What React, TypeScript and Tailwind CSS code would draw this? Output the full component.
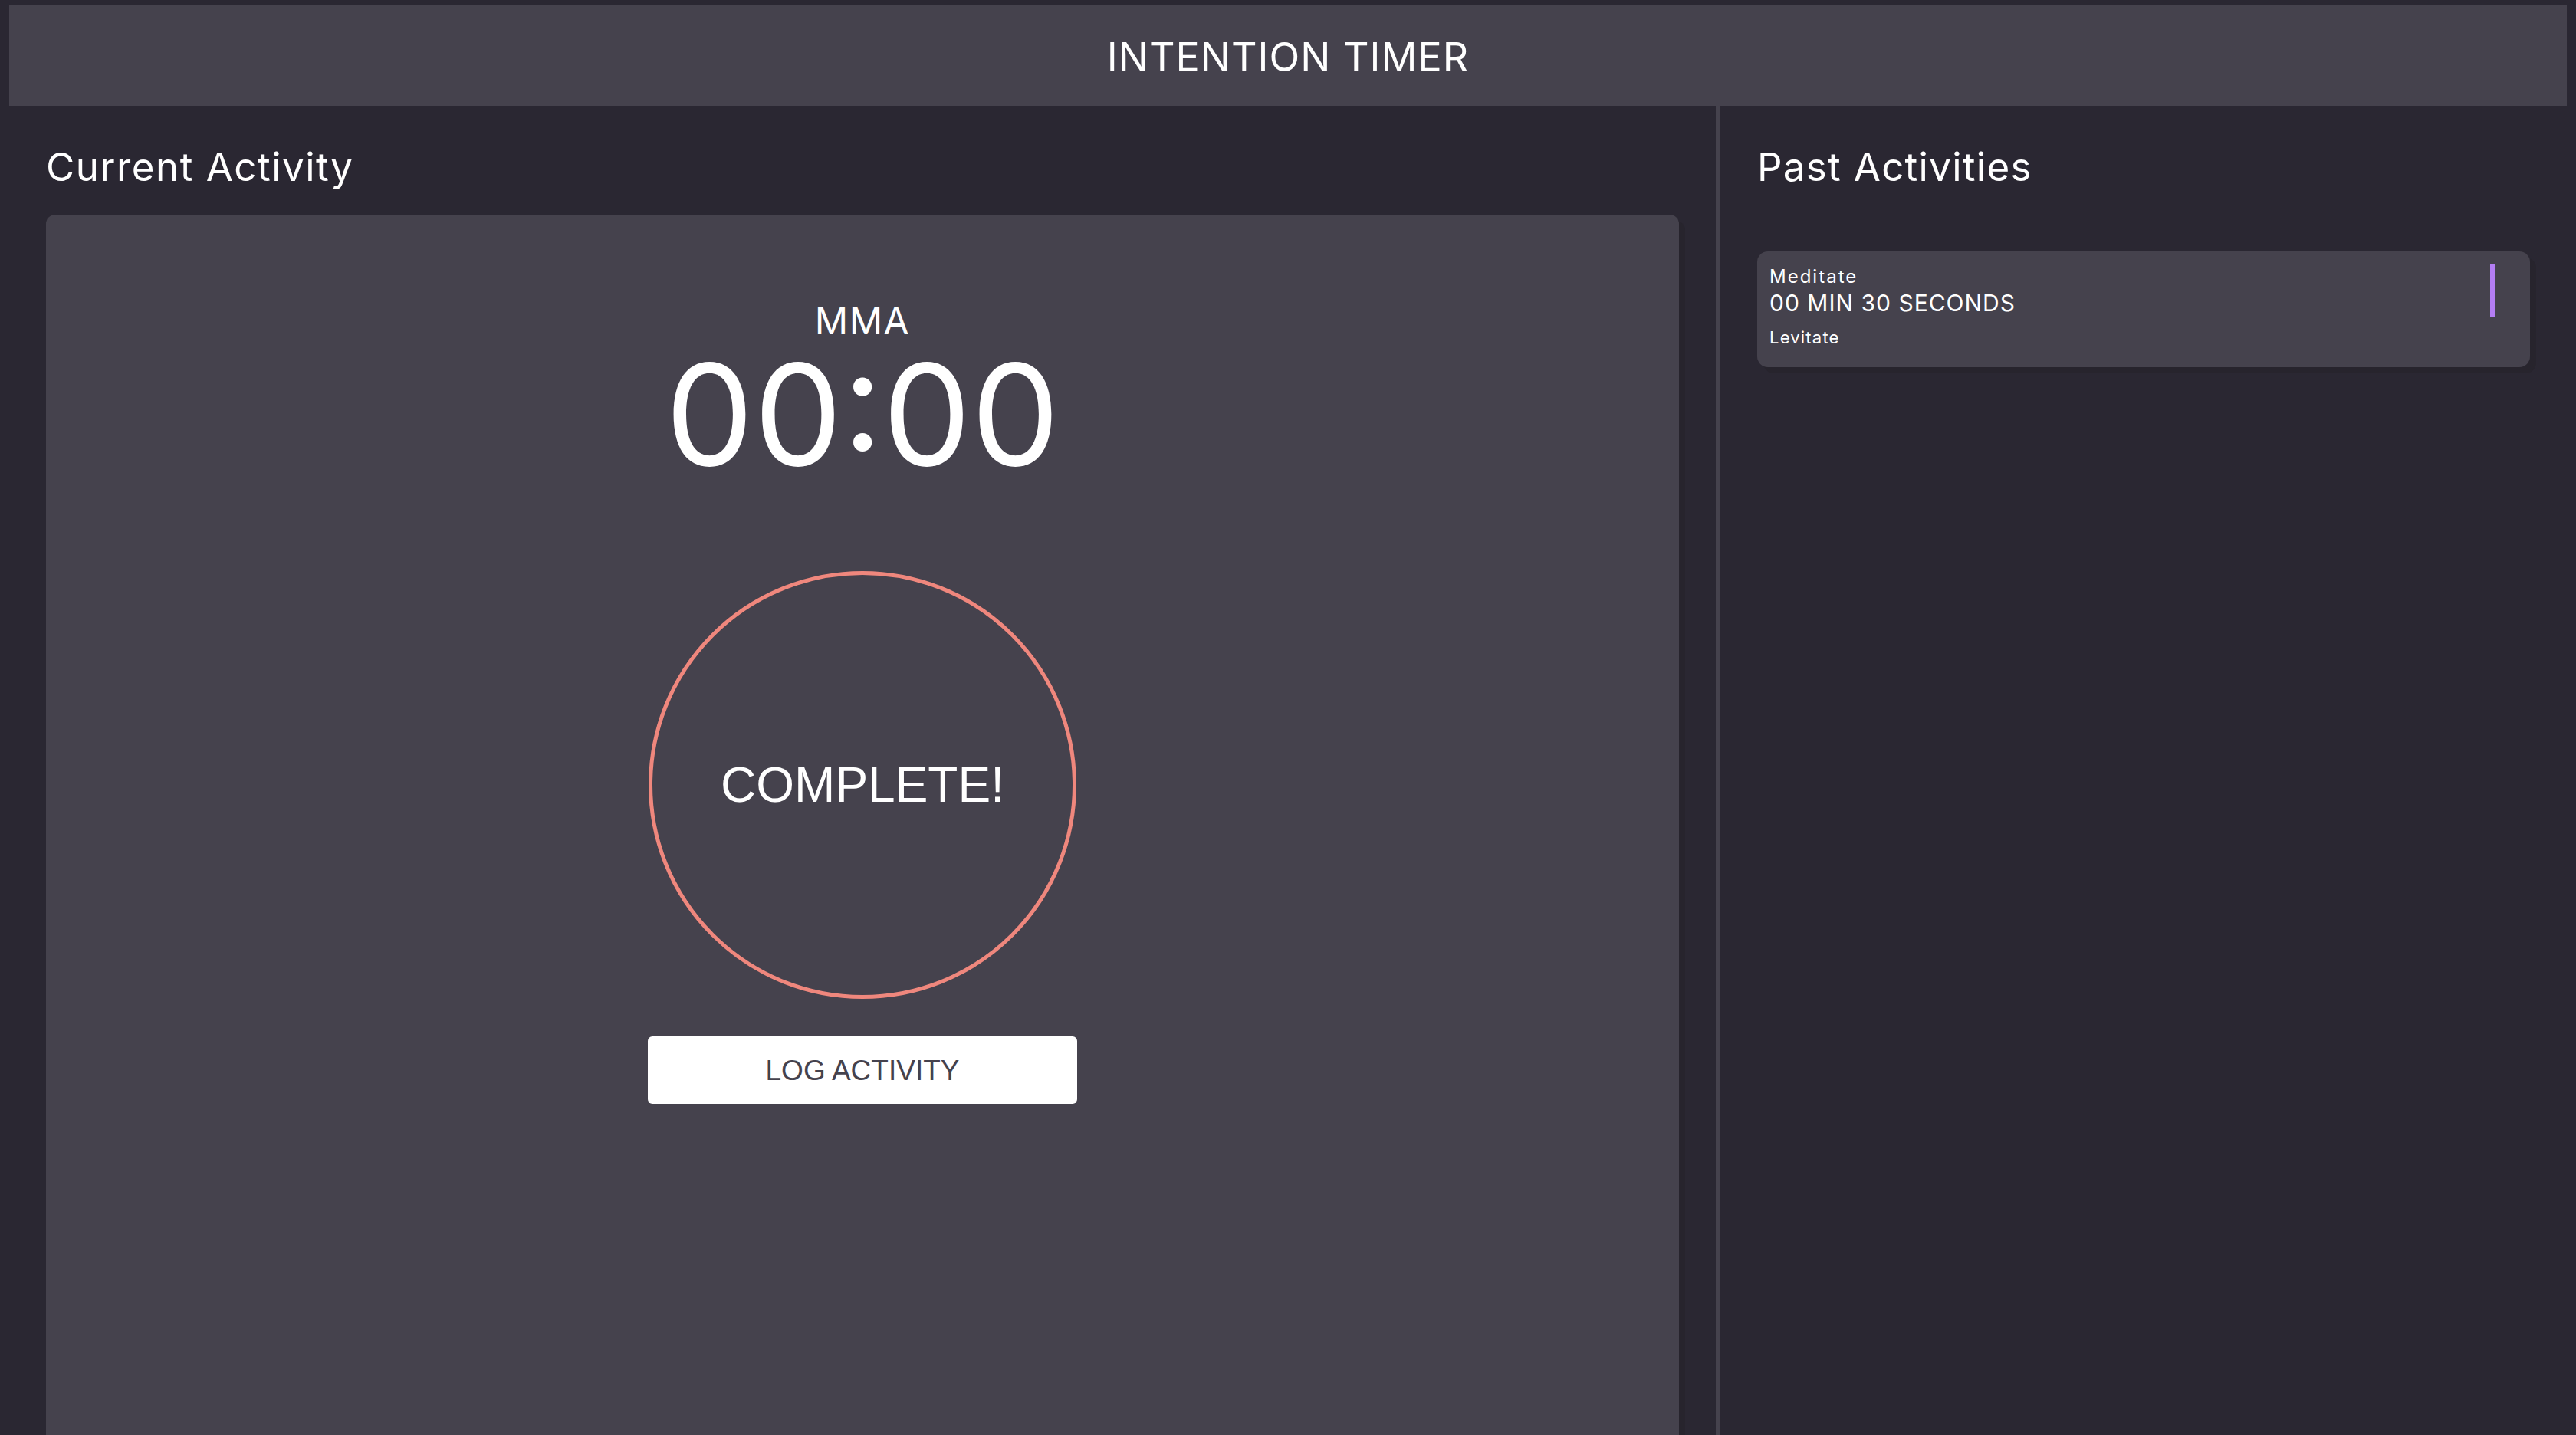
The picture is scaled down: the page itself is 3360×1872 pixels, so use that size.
import React from "react";

const sans = { fontFamily: "Inter, 'Noto Sans', sans-serif" };
const arial = { fontFamily: "'Liberation Sans', Arial, sans-serif" };

export default function App() {
  return (
    <div className="h-[1872px] w-[3360px] overflow-hidden bg-[#2a2732] pt-[6px] px-[12px] text-white" style={sans}>
      <header className="h-[132px] bg-[#45424d] flex items-center justify-center pt-[6px]">
        <h1 className="text-[52px] leading-none font-normal tracking-[1px]">INTENTION TIMER</h1>
      </header>
      <div className="flex">
        <section className="w-[2226px] px-[48px] pt-[54px]">
          <h2 className="text-[51px] leading-none font-normal tracking-[1.5px]">Current Activity</h2>
          <div className="mt-[37px] h-[1700px] rounded-[12px] bg-[#45424d] shadow-[8px_8px_0_#27242d] flex flex-col items-center pt-[115px]">
            <div className="text-[48px] leading-[40px] tracking-[1.5px] pt-[4px]">MMA</div>
            <div className="mt-[32px] text-[183px] leading-[140px]">00:00</div>
            <div className="mt-[134px] w-[558px] h-[558px] rounded-full border-[5px] border-[#ef877d] flex items-center justify-center">
              <span className="text-[64px] leading-none" style={arial}>COMPLETE!</span>
            </div>
            <button
              className="mt-[49px] w-[560px] h-[88px] rounded-[6px] bg-white text-[#45424d] text-[37px] leading-none"
              style={arial}
            >
              LOG ACTIVITY
            </button>
          </div>
        </section>
        <div className="w-[6px] h-[1800px] bg-[#45424d]" />
        <section className="flex-1 px-[48px] pt-[54px]">
          <h2 className="text-[51px] leading-none font-normal tracking-[1.3px]">Past Activities</h2>
          <div className="mt-[85px] rounded-[14px] bg-[#45424d] shadow-[8px_8px_0_#27242d] flex justify-between items-start pt-[16px] pl-[16px] pr-[46px] pb-[28px]">
            <div className="mt-[5px] flex flex-col">
              <div className="text-[24px] leading-none tracking-[2px]">Meditate</div>
              <div className="mt-[7px] text-[30px] leading-none tracking-[1px]">00 MIN 30 SECONDS</div>
              <div className="mt-[19px] text-[22px] leading-none tracking-[1.2px]">Levitate</div>
            </div>
            <div className="w-[6px] h-[70px] bg-[#b47ef4]" />
          </div>
        </section>
      </div>
    </div>
  );
}
